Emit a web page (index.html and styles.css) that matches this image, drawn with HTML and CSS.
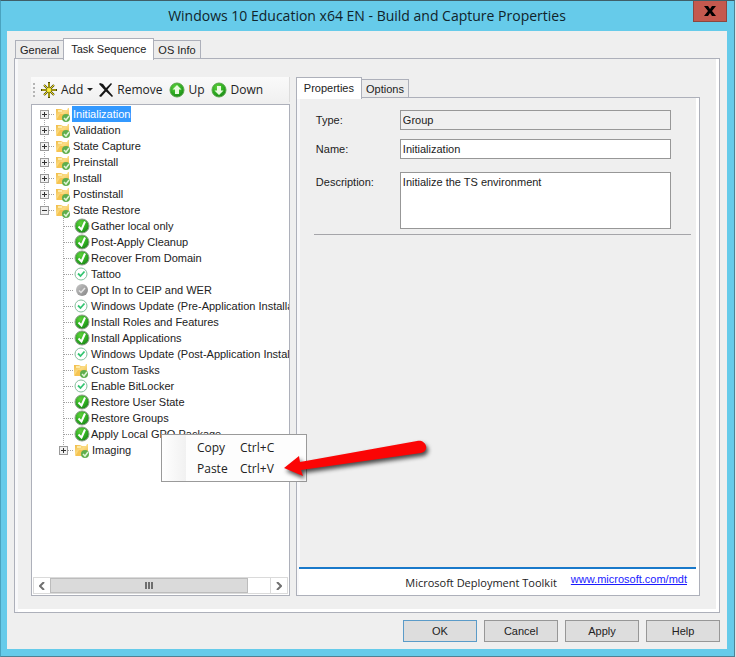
FILE: index.html
```html
<!DOCTYPE html>
<html lang="en">
<head>
    <meta charset="UTF-8">
    <meta name="viewport" content="width=device-width, initial-scale=1.0">
    <title>Build and Capture Properties</title>
    <link rel="stylesheet" href="styles.css">
</head>
<body>
    <svg class="symbols" aria-hidden="true">
        <defs>
            <linearGradient id="folder-fill" x1="0" y1="0" x2="1" y2="1">
                <stop offset="0" stop-color="#f0b840"/>
                <stop offset="0.5" stop-color="#fbdc84"/>
                <stop offset="1" stop-color="#eeb23c"/>
            </linearGradient>
            <radialGradient id="green-fill" cx="0.4" cy="0.3" r="0.7">
                <stop offset="0" stop-color="#5fd03c"/>
                <stop offset="0.6" stop-color="#2fae22"/>
                <stop offset="1" stop-color="#1c8a18"/>
            </radialGradient>
            <linearGradient id="gray-fill" x1="0" y1="0" x2="1" y2="1">
                <stop offset="0" stop-color="#c6c6c6"/>
                <stop offset="1" stop-color="#858585"/>
            </linearGradient>
        </defs>
        <symbol id="icon-folder" viewBox="0 0 16 16">
            <path d="M0 3h5l2 1h4l1-2h1v11H0z" fill="url(#folder-fill)"/>
            <path d="M0 14l4-6h9v6z" fill="#f6c452"/>
            <path d="M2 4h4v2H2z" fill="#fdeaa8"/>
            <circle cx="10" cy="12" r="4" fill="#5fae4d"/>
            <path d="M8 12l2 2 3-4" fill="none" stroke="#dff5d6" stroke-width="1.500"/>
        </symbol>
        <symbol id="icon-done" viewBox="0 0 16 16">
            <circle cx="8" cy="8" r="7" fill="url(#green-fill)" stroke="#8f9c8c"/>
            <path d="M4.500 8.500l3 3 3.500-8" fill="none" stroke="#fff" stroke-width="2"/>
        </symbol>
        <symbol id="icon-light" viewBox="0 0 16 16">
            <circle cx="7" cy="8" r="6" fill="#fff" stroke="#86bd9c"/>
            <path d="M4 7.500l2.500 2.500 4-4.500" fill="none" stroke="#33c671" stroke-width="1.800"/>
        </symbol>
        <symbol id="icon-off" viewBox="0 0 16 16">
            <circle cx="8" cy="8" r="6" fill="url(#gray-fill)"/>
            <path d="M5 8.500l2 2 4-4.500" fill="none" stroke="#e4e4e4" stroke-width="1.500"/>
        </symbol>
    </svg>

    <div class="dialog">
        <header class="titlebar">
            <h1>Windows 10 Education x64 EN - Build and Capture Properties</h1>
            <button class="close" aria-label="Close">
                <svg width="12" height="10" viewBox="0 0 12 10"><path d="M0 0h4l2 3 2-3h4L8 5l4 5H8L6 7l-2 3H0l4-5z"/></svg>
            </button>
        </header>

        <main class="client">
            <div class="tabs">
                <button class="tab">General</button>
                <button class="tab active">Task Sequence</button>
                <button class="tab">OS Info</button>
            </div>

            <div class="page">
                <section class="left">
                    <div class="toolbar">
                        <span class="grip"></span>
                        <button class="tool">
                            <svg width="16" height="16" viewBox="0 0 16 16">
                                <path d="M8 0v16M0 8h16M3 3l10 10M13 3L3 13" stroke="#4b470c" stroke-width="2"/>
                                <path d="M8 1v14M1 8h14M3 3l10 10M13 3L3 13" stroke="#f0e01c" stroke-width="1"/>
                                <circle cx="8" cy="8" r="2" fill="#fdf240"/>
                            </svg>
                            Add
                            <span class="arrow-down"></span>
                        </button>
                        <button class="tool">
                            <svg width="14" height="14" viewBox="0 0 14 14">
                                <path d="M1 0l3 1 3 4 5-5 1 1-4.500 5.500L14 13l-1 1-6-5.500L2 14l-2-1 5.500-6L0 1z" fill="#161616"/>
                            </svg>
                            Remove
                        </button>
                        <button class="tool">
                            <svg width="16" height="16" viewBox="0 0 16 16">
                                <circle cx="8" cy="8" r="7" fill="url(#green-fill)" stroke="#5aa84a"/>
                                <path d="M8 3l4.500 4.500H10V12H6V7.500H3.500z" fill="#e9fbe0"/>
                            </svg>
                            Up
                        </button>
                        <button class="tool">
                            <svg width="16" height="16" viewBox="0 0 16 16">
                                <circle cx="8" cy="8" r="7" fill="url(#green-fill)" stroke="#5aa84a"/>
                                <path d="M8 13l4.500-4.500H10V4H6v4.500H3.500z" fill="#e9fbe0"/>
                            </svg>
                            Down
                        </button>
                    </div>

                    <div class="tree">
                        <ul class="tree-list">
                            <li>
                                <div class="row"><button class="toggle" aria-label="Expand"></button><i class="stub"></i><svg class="icon"><use href="#icon-folder"/></svg><span class="label selected">Initialization</span></div>
                            </li>
                            <li>
                                <div class="row"><button class="toggle" aria-label="Expand"></button><i class="stub"></i><svg class="icon"><use href="#icon-folder"/></svg><span class="label">Validation</span></div>
                            </li>
                            <li>
                                <div class="row"><button class="toggle" aria-label="Expand"></button><i class="stub"></i><svg class="icon"><use href="#icon-folder"/></svg><span class="label">State Capture</span></div>
                            </li>
                            <li>
                                <div class="row"><button class="toggle" aria-label="Expand"></button><i class="stub"></i><svg class="icon"><use href="#icon-folder"/></svg><span class="label">Preinstall</span></div>
                            </li>
                            <li>
                                <div class="row"><button class="toggle" aria-label="Expand"></button><i class="stub"></i><svg class="icon"><use href="#icon-folder"/></svg><span class="label">Install</span></div>
                            </li>
                            <li>
                                <div class="row"><button class="toggle" aria-label="Expand"></button><i class="stub"></i><svg class="icon"><use href="#icon-folder"/></svg><span class="label">Postinstall</span></div>
                            </li>
                            <li>
                                <div class="row"><button class="toggle open" aria-label="Collapse"></button><i class="stub"></i><svg class="icon"><use href="#icon-folder"/></svg><span class="label">State Restore</span></div>
                                <ul class="tree-list nested">
                                    <li><div class="row leaf"><i class="stub"></i><svg class="icon"><use href="#icon-done"/></svg><span class="label">Gather local only</span></div></li>
                                    <li><div class="row leaf"><i class="stub"></i><svg class="icon"><use href="#icon-done"/></svg><span class="label">Post-Apply Cleanup</span></div></li>
                                    <li><div class="row leaf"><i class="stub"></i><svg class="icon"><use href="#icon-done"/></svg><span class="label">Recover From Domain</span></div></li>
                                    <li><div class="row leaf"><i class="stub"></i><svg class="icon"><use href="#icon-light"/></svg><span class="label">Tattoo</span></div></li>
                                    <li><div class="row leaf"><i class="stub"></i><svg class="icon"><use href="#icon-off"/></svg><span class="label">Opt In to CEIP and WER</span></div></li>
                                    <li><div class="row leaf"><i class="stub"></i><svg class="icon"><use href="#icon-light"/></svg><span class="label">Windows Update (Pre-Application Installation)</span></div></li>
                                    <li><div class="row leaf"><i class="stub"></i><svg class="icon"><use href="#icon-done"/></svg><span class="label">Install Roles and Features</span></div></li>
                                    <li><div class="row leaf"><i class="stub"></i><svg class="icon"><use href="#icon-done"/></svg><span class="label">Install Applications</span></div></li>
                                    <li><div class="row leaf"><i class="stub"></i><svg class="icon"><use href="#icon-light"/></svg><span class="label">Windows Update (Post-Application Installation)</span></div></li>
                                    <li><div class="row leaf"><i class="stub"></i><svg class="icon"><use href="#icon-folder"/></svg><span class="label">Custom Tasks</span></div></li>
                                    <li><div class="row leaf"><i class="stub"></i><svg class="icon"><use href="#icon-light"/></svg><span class="label">Enable BitLocker</span></div></li>
                                    <li><div class="row leaf"><i class="stub"></i><svg class="icon"><use href="#icon-done"/></svg><span class="label">Restore User State</span></div></li>
                                    <li><div class="row leaf"><i class="stub"></i><svg class="icon"><use href="#icon-done"/></svg><span class="label">Restore Groups</span></div></li>
                                    <li><div class="row leaf"><i class="stub"></i><svg class="icon"><use href="#icon-done"/></svg><span class="label">Apply Local GPO Package</span></div></li>
                                    <li><div class="row"><button class="toggle" aria-label="Expand"></button><i class="stub"></i><svg class="icon"><use href="#icon-folder"/></svg><span class="label">Imaging</span></div></li>
                                </ul>
                            </li>
                        </ul>

                        <div class="scrollbar">
                            <button class="scroll-btn" aria-label="Scroll left">
                                <svg width="6" height="8" viewBox="0 0 6 8"><path d="M5 0L1 4l4 4"/></svg>
                            </button>
                            <div class="track"><div class="thumb"><i></i><i></i><i></i></div></div>
                            <button class="scroll-btn" aria-label="Scroll right">
                                <svg width="6" height="8" viewBox="0 0 6 8"><path d="M1 0l4 4-4 4"/></svg>
                            </button>
                        </div>
                    </div>
                </section>

                <section class="right">
                    <div class="tabs">
                        <button class="tab active">Properties</button>
                        <button class="tab">Options</button>
                    </div>
                    <div class="details">
                        <form class="form">
                            <label for="type">Type:</label>
                            <input id="type" type="text" value="Group" readonly>
                            <label for="name">Name:</label>
                            <input id="name" type="text" value="Initialization">
                            <label for="description">Description:</label>
                            <textarea id="description">Initialize the TS environment</textarea>
                        </form>
                        <hr>
                        <footer class="about">
                            <span>Microsoft Deployment Toolkit</span>
                            <a href="#">www.microsoft.com/mdt</a>
                        </footer>
                    </div>
                </section>
            </div>

            <div class="actions">
                <button class="btn default">OK</button>
                <button class="btn">Cancel</button>
                <button class="btn">Apply</button>
                <button class="btn">Help</button>
            </div>
        </main>

        <div class="menu">
            <button class="menu-item"><span>Copy</span><span>Ctrl+C</span></button>
            <button class="menu-item"><span>Paste</span><span>Ctrl+V</span></button>
        </div>

        <svg class="pointer" width="150" height="50" viewBox="0 0 150 50" aria-hidden="true">
            <path d="M3 30L18 18l1 6L136 3c4-1 8 1 9 5 1 3-1 6-5 7L20 32l2 6z" fill="#fb0505"/>
        </svg>
    </div>
</body>
</html>
```
FILE: styles.css
```css
:root {
    --frame: #66cbea;
    --face: #efefef;
    --line: #adb0ba;
    --field-line: #979797;
    --text: #222222;
    --ui-font: "Liberation Sans", Arial, sans-serif;
    --menu-font: "Open Sans", "Segoe UI", sans-serif;
}

* {
    box-sizing: border-box;
    margin: 0;
    padding: 0;
}

body {
    background-color: #dde3e6;
    color: var(--text);
    font-family: var(--ui-font);
    font-size: 11px;
    line-height: 16px;
}

button,
input,
textarea {
    font: inherit;
    color: inherit;
    border: none;
    border-radius: 0;
    background: none;
}

ul {
    list-style: none;
}

.symbols {
    position: absolute;
    width: 0;
    height: 0;
}

.dialog {
    position: relative;
    display: flex;
    flex-direction: column;
    min-height: 100vh;
    margin-right: 1px;
    padding: 0 7px 7px 6px;
    background-color: var(--frame);
    border: 1px solid #4f8193;
    border-top-color: #3f5f69;
    border-left-color: #4aa3bf;
}

/* Title bar */
.titlebar {
    display: grid;
    grid-template-columns: 1fr auto;
    height: 30px;
}

h1 {
    grid-area: 1 / 1 / 2 / 3;
    text-align: center;
    font-family: var(--menu-font);
    font-size: 14px;
    font-weight: normal;
    line-height: 30px;
    color: #10242b;
}

.close {
    grid-area: 1 / 2;
    display: flex;
    align-items: center;
    justify-content: center;
    width: 34px;
    height: 21px;
    background-color: #c4594e;
    border: 1px solid #8c4740;
    border-top: none;
}

.client {
    flex: 1;
    display: flex;
    flex-direction: column;
    padding: 7px;
    background-color: var(--face);
}

/* Tabs */
.tabs {
    display: flex;
    align-items: flex-end;
    height: 20px;
    padding-left: 1px;
}

.tab {
    height: 18px;
    padding: 0 4px;
    background-color: #ececec;
    border: 1px solid var(--line);
    border-bottom: none;
    white-space: nowrap;
}

.tab.active {
    position: relative;
    z-index: 1;
    height: 22px;
    margin: 0 -1px -2px;
    padding: 0 7px 2px;
    background-color: #fff;
}

.page {
    flex: 1;
    display: flex;
    gap: 6px;
    padding: 18px 19px 16px 14px;
    border: 1px solid var(--line);
    box-shadow: inset 3px 0 #f8f8fa, inset -3px -3px #fff;
}

/* Left side */
.left {
    flex: 260 1 0;
    min-width: 0;
    display: flex;
    flex-direction: column;
    gap: 2px;
    padding-left: 2px;
}

.toolbar {
    display: flex;
    align-items: center;
    gap: 6px;
    height: 25px;
    padding-left: 2px;
    background: linear-gradient(#fafafa, #f0f0f0);
    border-right: 1px solid #dcdcdc;
    font-family: var(--menu-font);
    font-size: 12px;
}

.grip {
    width: 2px;
    height: 14px;
    background: repeating-linear-gradient(#b5b5b5 0 2px, transparent 2px 4px);
}

.tool {
    display: flex;
    align-items: center;
    gap: 4px;
    white-space: nowrap;
}

.arrow-down {
    border: 3px solid transparent;
    border-top-color: #222;
    border-bottom: none;
}

.tree {
    flex: 1;
    display: flex;
    flex-direction: column;
    justify-content: space-between;
    padding: 1px;
    background-color: #fff;
    border: 1px solid var(--line);
    overflow: hidden;
}

.tree-list {
    padding-left: 7px;
}

.tree-list.nested {
    padding-left: 19px;
}

.row {
    display: flex;
    align-items: center;
    height: 16px;
    white-space: nowrap;
    background: repeating-linear-gradient(#a8a8a8 0 1px, transparent 1px 2px) 4px 0 / 1px 100% no-repeat;
}

.tree-list > li:first-child > .row:not(.leaf) {
    background-position: 4px 8px;
}

.tree-list > li:last-child > .row {
    background-size: 1px 8px;
}

.toggle {
    flex: none;
    width: 9px;
    height: 9px;
    background:
        linear-gradient(#333, #333) center / 5px 1px no-repeat,
        linear-gradient(#333, #333) center / 1px 5px no-repeat,
        #f1f1f1;
    border: 1px solid #9a9a9a;
}

.toggle.open {
    background:
        linear-gradient(#333, #333) center / 5px 1px no-repeat,
        #f1f1f1;
}

.stub {
    flex: none;
    width: 5px;
    margin-right: 2px;
    border-top: 1px dotted #a0a0a0;
}

.leaf .stub {
    width: 10px;
    margin-left: 4px;
    margin-right: 1px;
}

.icon {
    flex: none;
    width: 16px;
    height: 16px;
}

.label {
    padding: 0 1px;
}

.label.selected {
    background-color: #3399ff;
    color: #fff;
}

.scrollbar {
    display: flex;
    height: 17px;
    border: 1px solid #dadada;
}

.scroll-btn {
    display: flex;
    align-items: center;
    justify-content: center;
    width: 16px;
}

.scroll-btn path {
    fill: none;
    stroke: #707070;
    stroke-width: 2;
}

.track {
    flex: 1;
    border-right: 1px solid #dadada;
}

.thumb {
    display: flex;
    align-items: center;
    justify-content: center;
    gap: 1px;
    width: 90%;
    height: 100%;
    background-color: #dadada;
    border: 1px solid #bcbcbc;
}

.thumb i {
    width: 2px;
    height: 7px;
    background-color: #6e6e6e;
}

/* Right side */
.right {
    flex: 406 1 0;
    min-width: 0;
    display: flex;
    flex-direction: column;
}

.details {
    flex: 1;
    display: flex;
    flex-direction: column;
    padding: 12px 3px 0 2px;
    border: 1px solid var(--line);
    box-shadow: inset 3px 0 #f8f8fa, inset -3px 0 #fff;
}

.form {
    display: grid;
    grid-template-columns: 84px 1fr;
    row-gap: 9px;
    padding: 0 25px 0 17px;
}

.form label {
    padding-top: 2px;
}

.form input,
.form textarea {
    width: 100%;
    height: 20px;
    padding: 0 2px;
    background-color: #fff;
    border: 1px solid var(--field-line);
}

.form input[readonly] {
    background-color: var(--face);
}

.form textarea {
    display: block;
    height: 57px;
    padding: 1px 2px;
    resize: none;
}

.form label[for="description"],
.form textarea {
    margin-top: 4px;
}

hr {
    margin: 5px 5px 0 15px;
    border: none;
    border-top: 1px solid #a5a5a9;
}

.about {
    display: flex;
    gap: 14px;
    justify-content: flex-end;
    height: 28px;
    margin-top: auto;
    padding: 2px 9px 0 0;
    background-color: #fff;
    border-top: 2px solid #1979ca;
}

.about span {
    padding-top: 4px;
    font-family: var(--menu-font);
}

.about a {
    color: #1a1aff;
}

/* Dialog buttons */
.actions {
    display: flex;
    justify-content: flex-end;
    gap: 7px;
    padding-top: 7px;
}

.btn {
    width: 74px;
    height: 22px;
    background-color: #dddddd;
    border: 1px solid #979797;
}

.btn.default {
    border-color: #5b9bc8;
}

/* Context menu */
.menu {
    position: absolute;
    left: 160px;
    top: 433px;
    width: 146px;
    padding: 2px 1px;
    background: linear-gradient(90deg, #fff, #f1f1f1 24px, #fdfdfd 24px);
    border: 1px solid #9a9a9a;
    font-family: var(--menu-font);
    font-size: 12px;
}

.menu-item {
    display: grid;
    grid-template-columns: 43px auto;
    justify-items: start;
    align-items: center;
    height: 21px;
    padding-left: 34px;
}

.pointer {
    position: absolute;
    left: 280px;
    top: 437px;
    filter: drop-shadow(2px 3px 2px rgba(0, 0, 0, 0.7));
}
```
